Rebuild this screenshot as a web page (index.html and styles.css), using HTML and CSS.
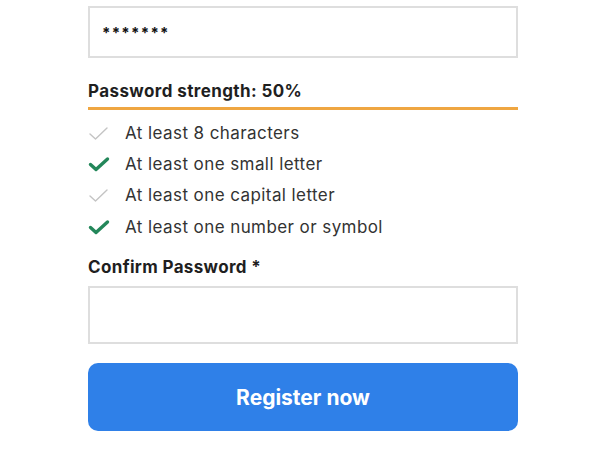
FILE: index.html
```html
<!DOCTYPE html>
<html lang="en">

<head>
    <meta charset="UTF-8">
    <meta name="viewport" content="width=device-width, initial-scale=1.0">
    <title>Register</title>
    <link rel="stylesheet" href="styles.css">
</head>

<body>
    <form class="form">
        <div class="input input-password">*******</div>

        <div class="strength">Password strength: 50%</div>
        <div class="strength-bar"></div>

        <ul class="rules">
            <li class="rule">
                <svg class="check" viewBox="0 0 22 16"><path d="M2 9 L7.5 14 L19 3" /></svg>
                At least 8 characters
            </li>
            <li class="rule ok">
                <svg class="check" viewBox="0 0 22 16"><path d="M2.5 8.5 L8 13.5 L19.5 3" /></svg>
                At least one small letter
            </li>
            <li class="rule">
                <svg class="check" viewBox="0 0 22 16"><path d="M2 9 L7.5 14 L19 3" /></svg>
                At least one capital letter
            </li>
            <li class="rule ok">
                <svg class="check" viewBox="0 0 22 16"><path d="M2.5 8.5 L8 13.5 L19.5 3" /></svg>
                At least one number or symbol
            </li>
        </ul>

        <label class="label">Confirm Password *</label>
        <div class="input input-confirm"></div>

        <button type="button" class="register">Register now</button>
    </form>
</body>
</html>
```

FILE: styles.css
```css
body {
    margin: 0;
    background: #ffffff;
    font-family: 'Inter', 'Noto Sans', sans-serif;
    color: #222222;
}

.form {
    width: 430px;
    margin-left: 88px;
    padding-top: 6px;
}

.input {
    box-sizing: border-box;
    border: 2px solid #dedede;
    background: #ffffff;
    display: flex;
    align-items: center;
    padding: 0 12px;
}

.input-password {
    height: 52px;
    font-size: 15px;
    font-weight: 700;
    letter-spacing: 1.3px;
    color: #111111;
}

.input-confirm {
    height: 58px;
}

.strength {
    margin-top: 23px;
    font-size: 17px;
    line-height: 20px;
    font-weight: 700;
    letter-spacing: 0.4px;
    color: #1f1f1f;
}

.strength-bar {
    margin-top: 6px;
    height: 3px;
    background: #efa641;
}

.rules {
    list-style: none;
    margin: 7px 0 0;
    padding: 0;
}

.rule {
    display: flex;
    align-items: center;
    gap: 15px;
    height: 31.3px;
    font-size: 17px;
    letter-spacing: 0.42px;
    color: #333333;
}

.check {
    width: 22px;
    height: 16px;
    fill: none;
    stroke: #c4c4c4;
    stroke-width: 1.4;
    stroke-linecap: round;
    stroke-linejoin: round;
}

.rule.ok .check {
    stroke: #23875a;
    stroke-width: 3.4;
}

.label {
    display: block;
    margin-top: 15px;
    margin-bottom: 9px;
    font-size: 17px;
    line-height: 20px;
    font-weight: 700;
    letter-spacing: 0.35px;
    color: #1f1f1f;
}

.register {
    display: block;
    width: 100%;
    height: 68px;
    margin-top: 19px;
    border: none;
    border-radius: 10px;
    background: #2f80e8;
    color: #ffffff;
    font-family: inherit;
    font-size: 21px;
    font-weight: 700;
    cursor: pointer;
}
```
